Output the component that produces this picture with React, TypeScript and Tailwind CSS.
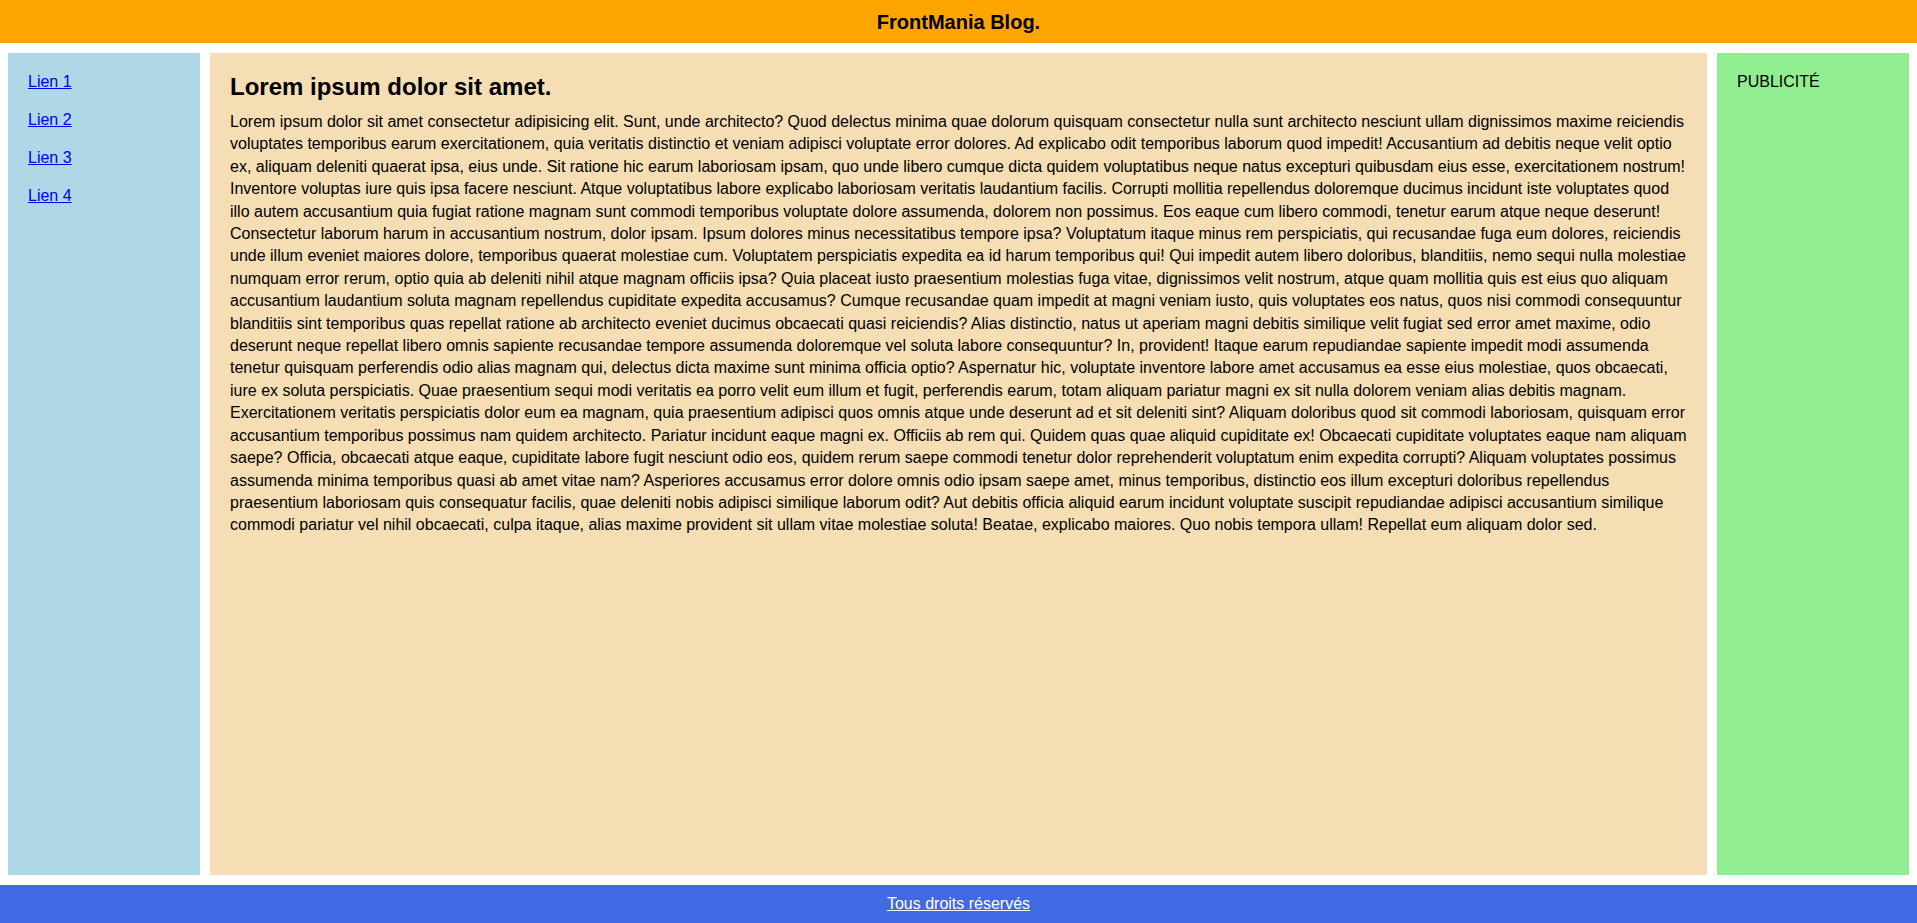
const TEXT =
  "Lorem ipsum dolor sit amet consectetur adipisicing elit. Sunt, unde architecto? Quod delectus minima quae dolorum quisquam consectetur nulla sunt architecto nesciunt ullam dignissimos maxime reiciendis voluptates temporibus earum exercitationem, quia veritatis distinctio et veniam adipisci voluptate error dolores. Ad explicabo odit temporibus laborum quod impedit! Accusantium ad debitis neque velit optio ex, aliquam deleniti quaerat ipsa, eius unde. Sit ratione hic earum laboriosam ipsam, quo unde libero cumque dicta quidem voluptatibus neque natus excepturi quibusdam eius esse, exercitationem nostrum! Inventore voluptas iure quis ipsa facere nesciunt. Atque voluptatibus labore explicabo laboriosam veritatis laudantium facilis. Corrupti mollitia repellendus doloremque ducimus incidunt iste voluptates quod illo autem accusantium quia fugiat ratione magnam sunt commodi temporibus voluptate dolore assumenda, dolorem non possimus. Eos eaque cum libero commodi, tenetur earum atque neque deserunt! Consectetur laborum harum in accusantium nostrum, dolor ipsam. Ipsum dolores minus necessitatibus tempore ipsa? Voluptatum itaque minus rem perspiciatis, qui recusandae fuga eum dolores, reiciendis unde illum eveniet maiores dolore, temporibus quaerat molestiae cum. Voluptatem perspiciatis expedita ea id harum temporibus qui! Qui impedit autem libero doloribus, blanditiis, nemo sequi nulla molestiae numquam error rerum, optio quia ab deleniti nihil atque magnam officiis ipsa? Quia placeat iusto praesentium molestias fuga vitae, dignissimos velit nostrum, atque quam mollitia quis est eius quo aliquam accusantium laudantium soluta magnam repellendus cupiditate expedita accusamus? Cumque recusandae quam impedit at magni veniam iusto, quis voluptates eos natus, quos nisi commodi consequuntur blanditiis sint temporibus quas repellat ratione ab architecto eveniet ducimus obcaecati quasi reiciendis? Alias distinctio, natus ut aperiam magni debitis similique velit fugiat sed error amet maxime, odio deserunt neque repellat libero omnis sapiente recusandae tempore assumenda doloremque vel soluta labore consequuntur? In, provident! Itaque earum repudiandae sapiente impedit modi assumenda tenetur quisquam perferendis odio alias magnam qui, delectus dicta maxime sunt minima officia optio? Aspernatur hic, voluptate inventore labore amet accusamus ea esse eius molestiae, quos obcaecati, iure ex soluta perspiciatis. Quae praesentium sequi modi veritatis ea porro velit eum illum et fugit, perferendis earum, totam aliquam pariatur magni ex sit nulla dolorem veniam alias debitis magnam. Exercitationem veritatis perspiciatis dolor eum ea magnam, quia praesentium adipisci quos omnis atque unde deserunt ad et sit deleniti sint? Aliquam doloribus quod sit commodi laboriosam, quisquam error accusantium temporibus possimus nam quidem architecto. Pariatur incidunt eaque magni ex. Officiis ab rem qui. Quidem quas quae aliquid cupiditate ex! Obcaecati cupiditate voluptates eaque nam aliquam saepe? Officia, obcaecati atque eaque, cupiditate labore fugit nesciunt odio eos, quidem rerum saepe commodi tenetur dolor reprehenderit voluptatum enim expedita corrupti? Aliquam voluptates possimus assumenda minima temporibus quasi ab amet vitae nam? Asperiores accusamus error dolore omnis odio ipsam saepe amet, minus temporibus, distinctio eos illum excepturi doloribus repellendus praesentium laboriosam quis consequatur facilis, quae deleniti nobis adipisci similique laborum odit? Aut debitis officia aliquid earum incidunt voluptate suscipit repudiandae adipisci accusantium similique commodi pariatur vel nihil obcaecati, culpa itaque, alias maxime provident sit ullam vitae molestiae soluta! Beatae, explicabo maiores. Quo nobis tempora ullam! Repellat eum aliquam dolor sed.";

const links = ["Lien 1", "Lien 2", "Lien 3", "Lien 4"];

export default function App() {
  return (
    <div className="flex h-screen flex-col gap-[10px] font-['Liberation_Sans',Arial,sans-serif] text-[16px] text-black">
      <header className="flex h-[43px] shrink-0 items-center justify-center bg-[#ffa500]">
        <h1 className="text-[20px] font-bold">FrontMania Blog.</h1>
      </header>

      <div className="grid min-h-0 flex-1 grid-cols-[192px_1fr_192px] gap-[10px] px-2">
        <nav className="bg-[#add8e6] px-5 pt-[17px]">
          <ul className="flex flex-col gap-[14px]">
            {links.map((l) => (
              <li key={l}>
                <a href="#" className="text-[#0000ee] underline">
                  {l}
                </a>
              </li>
            ))}
          </ul>
        </nav>

        <main className="bg-[#f5deb3] px-5 pt-5">
          <h2 className="text-[24px] font-bold leading-[28px]">Lorem ipsum dolor sit amet.</h2>
          <p className="mt-[10px] leading-[22.4px]">{TEXT}</p>
        </main>

        <aside className="bg-[#90ee90] px-5 pt-[17px]">
          <p>PUBLICITÉ</p>
        </aside>
      </div>

      <footer className="flex h-[38px] shrink-0 items-center justify-center bg-[#4169e1]">
        <a href="#" className="text-white underline">
          Tous droits réservés
        </a>
      </footer>
    </div>
  );
}
